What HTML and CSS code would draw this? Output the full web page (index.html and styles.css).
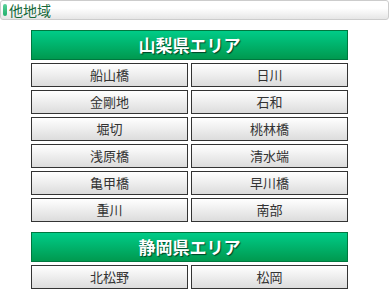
FILE: index.html
```html
<!DOCTYPE html>
<html lang="ja">
<head>
<meta charset="UTF-8">
<title>他地域</title>
<link rel="stylesheet" href="styles.css">
</head>
<body>
<div class="page-head"><span class="mark"></span>他地域</div>
<div class="areas">
    <div class="area">
        <h2 class="area-title">山梨県エリア</h2>
        <div class="grid">
            <a class="btn" href="#">船山橋</a>
            <a class="btn" href="#">日川</a>
            <a class="btn" href="#">金剛地</a>
            <a class="btn" href="#">石和</a>
            <a class="btn" href="#">堀切</a>
            <a class="btn" href="#">桃林橋</a>
            <a class="btn" href="#">浅原橋</a>
            <a class="btn" href="#">清水端</a>
            <a class="btn" href="#">亀甲橋</a>
            <a class="btn" href="#">早川橋</a>
            <a class="btn" href="#">重川</a>
            <a class="btn" href="#">南部</a>
        </div>
    </div>
    <div class="area">
        <h2 class="area-title">静岡県エリア</h2>
        <div class="grid">
            <a class="btn" href="#">北松野</a>
            <a class="btn" href="#">松岡</a>
        </div>
    </div>
</div>
</body>
</html>
```

FILE: styles.css
```css
body {
    margin: 0;
    font-family: "Noto Sans CJK JP", "Noto Sans", sans-serif;
    background: #fff;
}
.page-head {
    display: flex;
    align-items: center;
    height: 18px;
    border: 1px solid #ccc;
    border-radius: 3px;
    background: linear-gradient(#fff 40%, #e6e6e6);
    color: #16693a;
    font-size: 14px;
    line-height: 18px;
}
.mark {
    width: 4px;
    height: 12px;
    margin: 0 2px 0 2px;
    border-radius: 2px;
    background: linear-gradient(#5ad19a, #22b06c);
}
.areas {
    width: 317px;
    margin: 10px 0 0 31px;
}
.area {
    margin-bottom: 10px;
}
.area-title {
    height: 28px;
    margin: 0 0 3px;
    border: 1px solid #00773f;
    background: linear-gradient(#00cc88, #00994f);
    color: #fff;
    font-size: 17px;
    font-weight: bold;
    line-height: 28px;
    text-align: center;
    text-shadow: 1px 1px 1px rgba(0, 0, 0, 0.6);
}
.grid {
    display: grid;
    grid-template-columns: 1fr 1fr;
    gap: 3px;
}
.btn {
    display: block;
    height: 22px;
    border: 1px solid #333;
    background: linear-gradient(#fff, #dcdcdc);
    color: #333;
    font-size: 13px;
    line-height: 22px;
    text-align: center;
    text-decoration: none;
}
```
